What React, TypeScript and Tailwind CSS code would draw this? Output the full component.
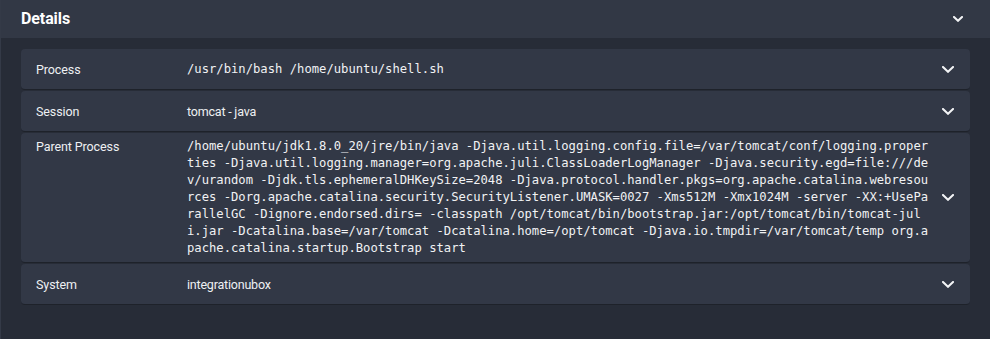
const rows: { label: string; value: string; mono?: boolean }[] = [
  { label: "Process", value: "/usr/bin/bash /home/ubuntu/shell.sh", mono: true },
  { label: "Session", value: "tomcat - java" },
  {
    label: "Parent Process",
    value:
      "/home/ubuntu/jdk1.8.0_20/jre/bin/java -Djava.util.logging.config.file=/var/tomcat/conf/logging.properties -Djava.util.logging.manager=org.apache.juli.ClassLoaderLogManager -Djava.security.egd=file:///dev/urandom -Djdk.tls.ephemeralDHKeySize=2048 -Djava.protocol.handler.pkgs=org.apache.catalina.webresources -Dorg.apache.catalina.security.SecurityListener.UMASK=0027 -Xms512M -Xmx1024M -server -XX:+UseParallelGC -Dignore.endorsed.dirs= -classpath /opt/tomcat/bin/bootstrap.jar:/opt/tomcat/bin/tomcat-juli.jar -Dcatalina.base=/var/tomcat -Dcatalina.home=/opt/tomcat -Djava.io.tmpdir=/var/tomcat/temp org.apache.catalina.startup.Bootstrap start",
    mono: true,
  },
  { label: "System", value: "integrationubox" },
];

function Chevron({ w = 12, h = 7 }: { w?: number; h?: number }) {
  return (
    <svg width={w} height={h} viewBox={`0 0 ${w} ${h}`} fill="none" className="shrink-0">
      <polyline
        points={`1,1 ${w / 2},${h - 1.2} ${w - 1},1`}
        stroke="#f3f4f6"
        strokeWidth="2"
        strokeLinecap="square"
        strokeLinejoin="miter"
      />
    </svg>
  );
}

export default function App() {
  return (
    <div className="min-h-[339px] w-[990px] border-l border-[#343a47] bg-[#272c37] font-['Roboto',sans-serif] text-[#eef0f3]">
      <header className="flex h-[38px] items-center justify-between bg-[#323845] pl-[20px] pr-[27px]">
        <h2 className="text-[16px] font-bold tracking-[-0.1px] text-white">Details</h2>
        <Chevron w={10} h={6} />
      </header>

      <div className="flex flex-col gap-[1px] px-[20px] pb-[34px] pt-[11px]">
        {rows.map((row) => (
          <div
            key={row.label}
            className="flex min-h-[41px] items-center rounded-[4px] border-b-[1px] border-[#1e222a] bg-[#323846] py-[5px] pl-[15px] pr-[16px]"
          >
            <div className="flex flex-1 items-start">
              <span className="w-[151px] shrink-0 text-[12.5px] leading-[17px] tracking-[-0.1px]">{row.label}</span>
              {row.mono ? (
                <span className="w-[745px] break-all font-['DejaVu_Sans_Mono',monospace] text-[12.2px] leading-[17px] text-[#f1f2f4]">
                  {row.value}
                </span>
              ) : (
                <span className="text-[12.5px] leading-[17px] tracking-[-0.2px]">{row.value}</span>
              )}
            </div>
            <Chevron w={12} h={7} />
          </div>
        ))}
      </div>
    </div>
  );
}
